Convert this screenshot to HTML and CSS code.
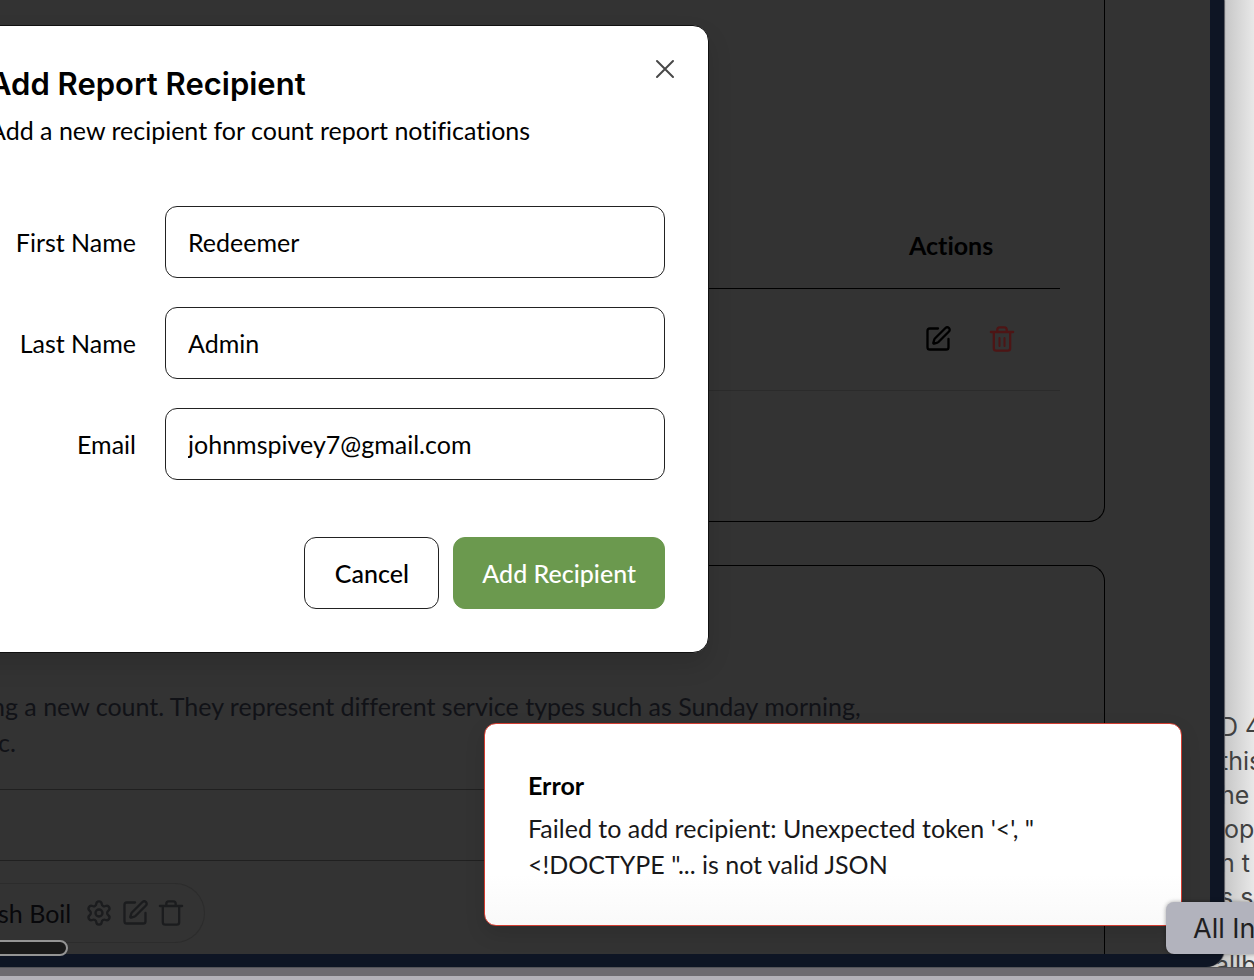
FILE: index.html
```html
<!DOCTYPE html>
<html lang="en">
<head>
<meta charset="utf-8">
<title>Report Recipients</title>
<link rel="stylesheet" href="styles.css">
</head>
<body>
<svg class="sprite" aria-hidden="true">
  <symbol id="edit" viewBox="0 0 24 24"><path d="M12 3H5a2 2 0 0 0-2 2v14a2 2 0 0 0 2 2h14a2 2 0 0 0 2-2v-7"/><path d="M18.4 2.6a2.1 2.1 0 0 1 3 3L12.4 14.600a2 2 0 0 1-.9.5l-2.900.840a.5.5 0 0 1-.6-.6l.84-2.900a2 2 0 0 1 .5-.850z"/></symbol>
  <symbol id="trash" viewBox="0 0 24 24"><path d="M2.500 6h19M19 6v14a2 2 0 0 1-2 2H7a2 2 0 0 1-2-2V6M8 6V4a2 2 0 0 1 2-2h4a2 2 0 0 1 2 2v2"/></symbol>
  <symbol id="gear" viewBox="0 0 24 24"><path d="M9.671 4.136a2.34 2.34 0 0 1 4.659 0 2.34 2.34 0 0 0 3.319 1.915 2.34 2.34 0 0 1 2.33 4.033 2.34 2.34 0 0 0 0 3.831 2.34 2.34 0 0 1-2.33 4.033 2.34 2.34 0 0 0-3.319 1.915 2.34 2.34 0 0 1-4.659 0 2.34 2.34 0 0 0-3.32-1.915 2.34 2.34 0 0 1-2.33-4.033 2.34 2.34 0 0 0 0-3.831A2.34 2.34 0 0 1 6.35 6.051a2.34 2.34 0 0 0 3.319-1.915"/><circle cx="12" cy="12" r="3"/></symbol>
</svg>
<div class="desktop">
  <div class="windows">
    <div class="app">
      <main class="content">
        <section class="card recipients">
          <table class="table">
            <thead><tr><td></td><th class="actions" scope="col">Actions</th></tr></thead>
            <tbody><tr><td></td><td class="actions">
              <div class="row-actions">
                <button class="icon-btn" aria-label="Edit recipient"><svg class="icon"><use href="#edit"/></svg></button>
                <button class="icon-btn danger" aria-label="Delete recipient"><svg class="icon"><use href="#trash"/><path d="M11.500 13v8M16.500 13v8"/></svg></button>
              </div>
            </td></tr></tbody>
          </table>
        </section>
        <section class="card services">
          <p class="description">ting a new count. They represent different service types such as Sunday morning,<br>etc.</p>
          <div class="divider-row"></div>
          <div class="pill">
            <span>sh Boil</span>
            <button class="icon-btn" aria-label="Settings"><svg class="icon"><use href="#gear"/></svg></button>
            <button class="icon-btn" aria-label="Edit"><svg class="icon"><use href="#edit"/></svg></button>
            <button class="icon-btn" aria-label="Delete"><svg class="icon"><use href="#trash"/></svg></button>
          </div>
        </section>
      </main>

      <div class="modal" role="dialog" aria-labelledby="modal-title">
        <button class="close" aria-label="Close"><svg viewBox="0 0 20 20"><path d="M2 2l16 16M18 2L2 18"/></svg></button>
        <h2 class="modal-title" id="modal-title">Add Report Recipient</h2>
        <p class="modal-text">Add a new recipient for count report notifications</p>
        <form class="form">
          <label for="first">First Name</label><input id="first" type="text" value="Redeemer">
          <label for="last">Last Name</label><input id="last" type="text" value="Admin">
          <label for="email">Email</label><input id="email" type="email" value="johnmspivey7@gmail.com">
          <div class="form-actions">
            <button type="button" class="btn">Cancel</button>
            <button type="button" class="btn primary">Add Recipient</button>
          </div>
        </form>
      </div>

      <div class="toast" role="alert">
        <strong class="toast-title">Error</strong>
        <p class="toast-text">Failed to add recipient: Unexpected token '&lt;', "&lt;!DOCTYPE "... is not valid JSON</p>
      </div>
    </div>
    <aside class="behind">
      <span>D 4</span>
      <span>this</span>
      <span>he</span>
      <span class="inset">op</span>
      <span>n t</span>
      <span>s sh</span>
      <span class="last">allb</span>
    </aside>
  </div>
  <div class="dock"></div>
  <div class="scroll-thumb"></div>
  <div class="tooltip">All In</div>
</div>
</body>
</html>
```
FILE: styles.css
```css
* { box-sizing: border-box; }
body { margin: 0; font: 25px/36px Lato, "Open Sans", sans-serif; font-variant-ligatures: none; color: #000; }
p, h2 { margin: 0; }
button { font: inherit; color: inherit; background: none; border: 0; padding: 0; }
.sprite { position: absolute; width: 0; height: 0; }

.desktop { position: relative; display: flex; flex-direction: column; height: 100vh; overflow: hidden; background: #69676b; }
.windows { display: flex; flex: 1; min-height: 0; }
.app { position: relative; z-index: 1; flex: 1; min-width: 0; display: flex; overflow: hidden; background: #333; border: solid #0e1524; border-width: 0 14px 13px 0; border-bottom-right-radius: 18px; box-shadow: 1px 0 1px #55565c; }
.content { flex: 1; min-width: 0; display: flex; flex-direction: column; gap: 43px; padding-right: 105px; }

.card { border: 1px solid #000; border-left: 0; }
.recipients { border-top: 0; border-bottom-right-radius: 16px; padding: 203px 44px 130px 0; }
.services { flex: 1; border-bottom: 0; border-top-right-radius: 16px; padding: 122px 44px 0 0; }

.table { width: 100%; border-collapse: collapse; }
.table thead { border-bottom: 1px solid #000; }
.table tbody { border-bottom: 1px solid #2b2b2b; }
.table th, .table td { height: 85px; padding: 0; text-align: left; font-weight: 700; }
.table tbody td { height: 102px; }
.table .actions { width: 180px; padding-left: 29px; }
.row-actions { display: flex; gap: 36px; padding-left: 15px; }

.icon-btn { display: flex; color: #000; }
.icon { width: 28px; height: 28px; fill: none; stroke: currentColor; stroke-width: 2; stroke-linecap: round; stroke-linejoin: round; }
.danger { color: #4d1515; }

.description { margin-left: -24px; color: #111217; white-space: nowrap; }
.divider-row { height: 72px; margin-top: 29px; border: solid #202020; border-width: 1px 0; }
.pill { display: inline-flex; align-items: center; gap: 8px; height: 60px; margin: 22px 0 0 -2px; padding-right: 19px; color: #08080b; border: 1px solid #2c2c2c; border-left: 0; border-radius: 0 30px 30px 0; }
.pill span { margin-right: 6px; }
.pill .icon-btn { color: #1b1c1e; }

.scroll-thumb { position: absolute; z-index: 2; left: -20px; bottom: 24px; width: 88px; height: 16px; background: #1a1a1a; border: 2px solid #949494; border-radius: 8px; }

.modal { position: absolute; left: -55px; top: 25px; width: 764px; padding: 39px 43px 43px; background: #fff; border: 1px solid #111; border-radius: 16px; box-shadow: 0 12px 24px rgba(0,0,0,.12); }
.modal-title { font: 600 31px/38px Inter, sans-serif; }
.modal-text { margin-top: 9px; }
.close { position: absolute; right: 33px; top: 33px; width: 20px; height: 20px; }
.close svg { display: block; width: 20px; height: 20px; fill: none; stroke: #484848; stroke-width: 2; stroke-linecap: round; }
.form { display: grid; grid-template-columns: 1fr 500px; column-gap: 29px; row-gap: 29px; align-items: center; margin-top: 58px; }
.form label { text-align: right; }
.form input { width: 100%; height: 72px; padding: 0 22px; font: inherit; color: #000; background: #fff; border: 1px solid #222; border-radius: 12px; }
.form-actions { grid-column: 1 / -1; display: flex; justify-content: flex-end; gap: 14px; margin-top: 28px; }
.btn { min-width: 135px; height: 72px; padding: 0 28px; font-weight: 500; background: #fff; border: 1px solid #222; border-radius: 12px; }
.primary { color: #fff; background: #6b994e; border-color: #6b994e; }

.toast { position: absolute; right: 28px; bottom: 28px; width: 698px; padding: 43px; background: linear-gradient(#fff 75%, #f9f9f9); border: 1px solid #d23c30; border-radius: 12px; box-shadow: 0 8px 20px rgba(0,0,0,.12); }
.toast-title { display: block; }
.toast-text { margin-top: 7px; color: #18181a; }

.behind { display: flex; flex-direction: column; justify-content: flex-end; width: 50px; margin-left: -20px; padding-left: 16px; overflow: hidden; white-space: nowrap; font: 25px/34px Inter, sans-serif; color: #414141; background: linear-gradient(90deg, #c6c6c6 20px, #e8e8e8); }
.behind .inset { padding-left: 4px; }
.behind .last { margin: 34px 0 -15px -5px; }

.dock { height: 13px; border-top: 1px solid #555559; border-bottom: 4px solid #b3b0b8; background: #6d6a70; }
.tooltip { position: absolute; z-index: 2; right: -60px; bottom: 26px; width: 148px; height: 52px; padding-left: 27px; font: 27px/54px Inter, sans-serif; color: #1f1f22; background: #b2b3bd; border-radius: 8px; box-shadow: 0 0 4px rgba(0,0,0,.35); }
```
